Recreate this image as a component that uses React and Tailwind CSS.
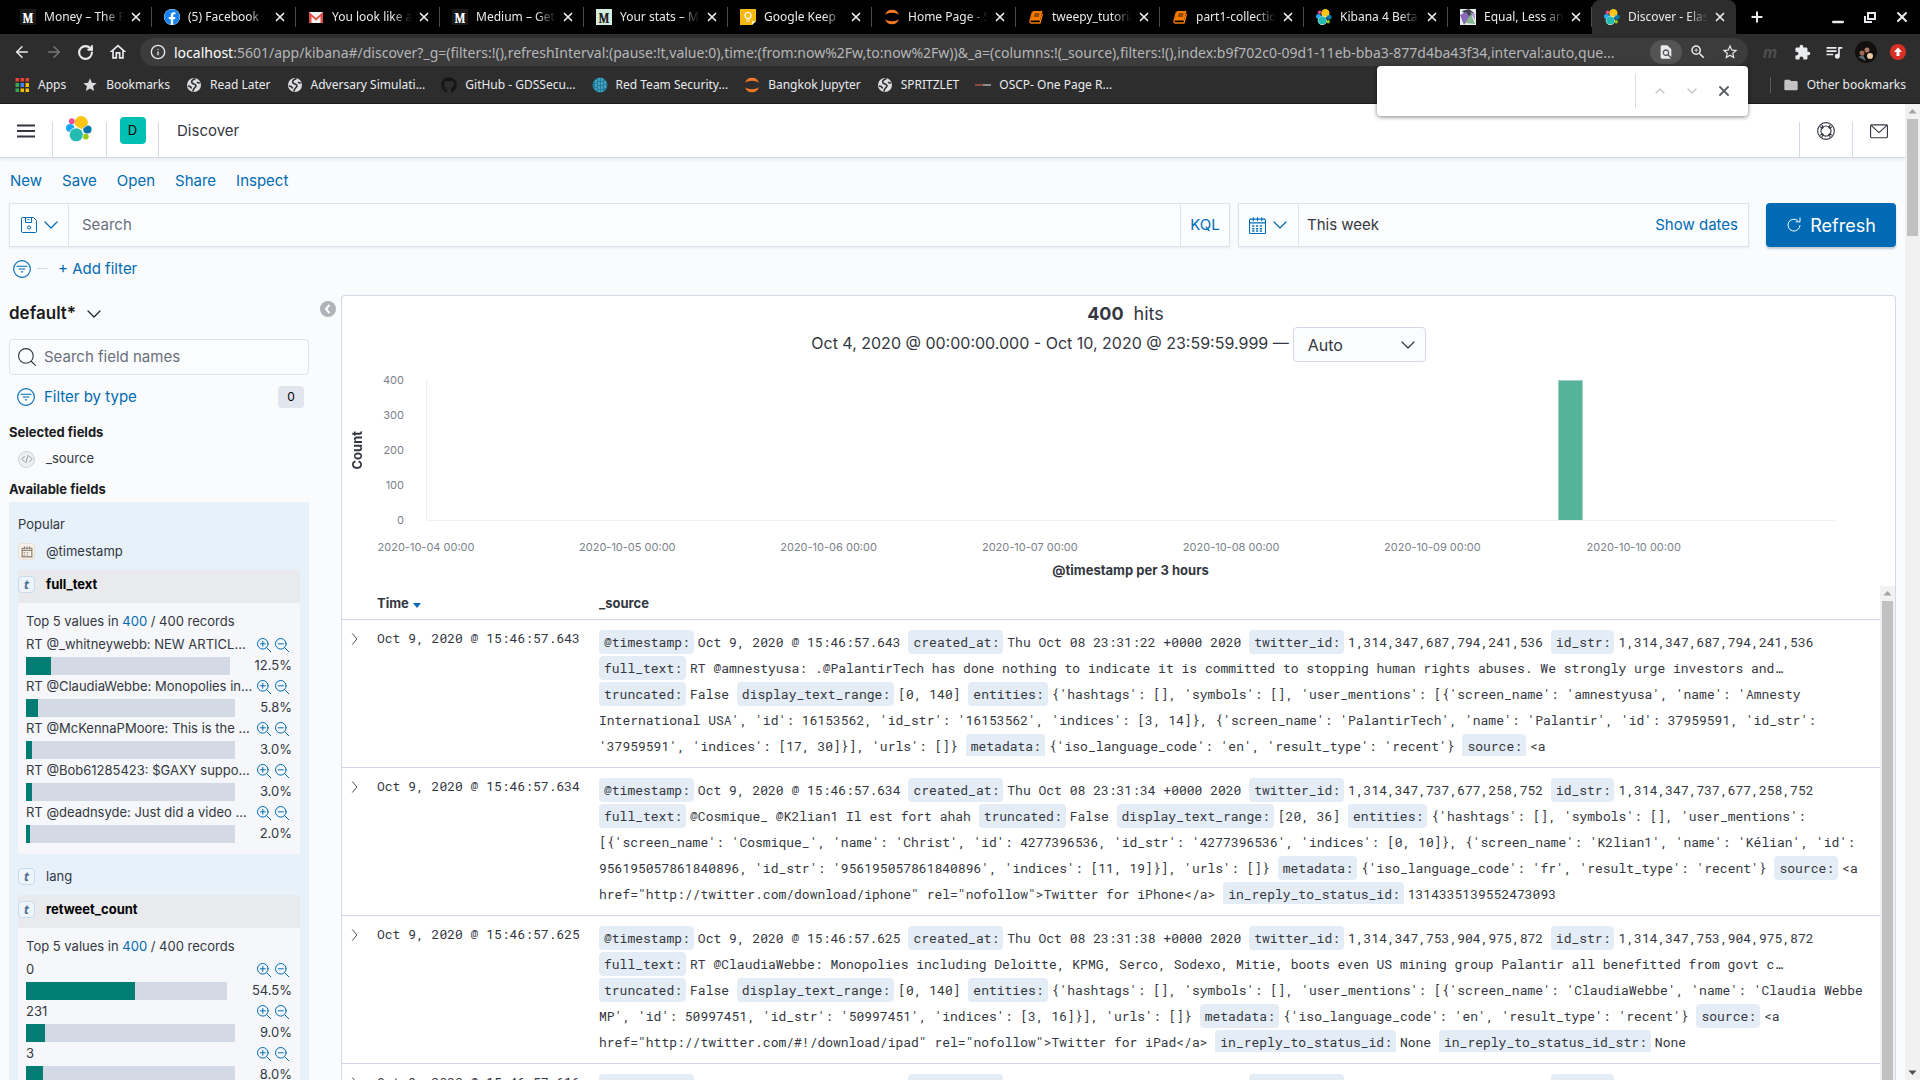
// Discover.jsx
import React from "react";
import { ArrowLeft, ArrowRight, RotateCw, Info, Plus, X, Minus, ChevronUp, ChevronDown } from "lucide-react";
import { MdExtension, MdQueueMusic, MdFindInPage, MdZoomIn, MdStarBorder, MdFolder, MdStar, MdOutlineHome } from "react-icons/md";
import { FaFacebook, FaGithub } from "react-icons/fa";

const ElasticLogo = ({ className }) => (
  <svg viewBox="0 0 26 26" className={className}>
    <ellipse cx="15.2" cy="6.7" rx="6.7" ry="6.7" fill="#FEC514" />
    <ellipse cx="5.8" cy="5.2" rx="2.9" ry="2.9" fill="#F04E98" />
    <ellipse cx="4.2" cy="12" rx="4.2" ry="4" fill="#1BA9F5" />
    <ellipse cx="21.4" cy="13.4" rx="4.2" ry="4" fill="#07A" />
    <ellipse cx="19.8" cy="20.6" rx="2.9" ry="2.9" fill="#93C90E" />
    <ellipse cx="10.2" cy="18.8" rx="7.4" ry="7.2" fill="#fff" />
    <ellipse cx="10.2" cy="18.8" rx="6.7" ry="6.5" fill="#24BBB1" />
    <path d="M8.5 9.6 L15.5 13.4 L21.5 9" fill="none" stroke="#fff" strokeWidth="0.8" />
  </svg>
);

const MediumIcon = ({ className }) => (
  <span className={className}>M</span>
);

const GmailIcon = () => (
  <svg viewBox="0 0 16 16" className="size-4">
    <path d="M1 3h14v11H1z" fill="#f2f2f2" />
    <path d="M1 14V3l7 6 7-6v11h-2.500V7.500L8 11.500 3.500 7.500V14z" fill="#e04a3f" />
  </svg>
);

const KeepIcon = () => (
  <svg viewBox="0 0 16 16" className="size-4">
    <path d="M0 0h16v12l-4 4H0z" fill="#f5b912" />
    <path d="M16 12l-4 4v-4z" fill="#fff3c4" />
    <circle cx="8" cy="6.500" r="3" fill="none" stroke="#fff" strokeWidth="1.200" />
    <path d="M6.500 10h3M6.500 12h3" stroke="#fff" strokeWidth="1.200" />
  </svg>
);

const JupyterIcon = () => (
  <svg viewBox="0 0 16 16" className="size-4">
    <path d="M1 6a7.300 7.300 0 0 1 14 0C12 3 4 3 1 6zM1 10a7.300 7.300 0 0 0 14 0C12 13 4 13 1 10z" fill="#f37726" />
  </svg>
);

const BookIcon = () => (
  <svg viewBox="0 0 16 16" className="size-4">
    <path d="M5 2h9.500l-2.500 9.500H2.500z" fill="#f57c00" />
    <path d="M4.500 3L2 11.500q-.5 2.500 1.500 2.500H12l2.500-9" fill="none" stroke="#f57c00" strokeWidth="1.300" />
    <path d="M6.500 5h5M6 7h5" stroke="#000" strokeWidth="0.800" />
  </svg>
);

const MathIcon = () => (
  <svg viewBox="0 0 16 16" className="size-4">
    <path d="M0 0h16v16H0z" fill="#e9edf0" />
    <path d="M2 2l7-2 5 4-5 5z" fill="#3a4048" />
    <path d="M0 6l6-3 4 5-6 8z" fill="#8a68b8" />
    <path d="M5 14l6-9 4 10z" fill="#86b78d" />
    <path d="M10 3l5 2v6z" fill="#b79bd6" />
  </svg>
);

const GlobeIcon = () => (
  <svg viewBox="0 0 16 16" className="size-4">
    <circle cx="8" cy="8" r="7" fill="#dadce0" />
    <path d="M9.500 1.500C6 3 5 4 6 6c1 1.500 4 .5 4 3-.5 2-3 2-3 5.500M2 9c2 0 3 .5 3.500 2.500M11 5c1 1 2.500 1 3 .5" fill="none" stroke="#2d2d2d" strokeWidth="1.600" />
  </svg>
);

const TealGlobe = () => (
  <svg viewBox="0 0 16 16" className="size-4">
    <circle cx="8" cy="8" r="7.500" fill="#1d7fa0" />
    <path d="M4 3v10M7 1v14M10 1v14M13 4v8" stroke="#7cc6d8" strokeWidth="0.900" strokeDasharray="3 1" />
  </svg>
);

const AppsIcon = () => (
  <svg viewBox="0 0 15 16" className="size-4">
    <path d="M1 1h3.500v3.500H1zM6 1h3.500v3.500H6zM11 1h3.500v3.500H11z" fill="#ea4335" />
    <path d="M1 6h3.500v4H1zM1 11.500h3.500V15H1z" fill="#34a853" />
    <path d="M6 6h3.500v4H6z" fill="#4285f4" />
    <path d="M11 6h3.500v4H11zM6 11.500h3.500V15H6zM11 11.500h3.500V15H11z" fill="#fbbc05" />
  </svg>
);

const OscpIcon = () => (
  <svg viewBox="0 0 16 16" className="size-4">
    <path d="M0 8h8" stroke="#8b4a3c" strokeWidth="2" />
    <path d="M8 8h8" stroke="#8c8c8c" strokeWidth="2" />
  </svg>
);

// thin outlined icons of the Kibana chrome, all on a 16px grid
const Icon = ({ className = "size-4", children }) => (
  <svg viewBox="0 0 16 16" className={className} fill="none" stroke="currentColor" strokeWidth="1" strokeLinecap="round" strokeLinejoin="round">
    {children}
  </svg>
);

const Chevron = ({ className }) => (
  <Icon className={className}>
    <path d="M2 5l6 6 6-6" strokeWidth="1.200" />
  </Icon>
);

const FilterIcon = ({ className }) => (
  <Icon className={className}>
    <circle cx="8" cy="8" r="7.400" />
    <path d="M3.500 5.500h9M5.500 8h5M7.500 10.500h1" />
  </Icon>
);

const Magnifier = ({ minus }) => (
  <Icon className="size-4">
    <circle cx="6.800" cy="6.800" r="5.300" />
    <path d="M10.800 10.800l4 4M4.300 6.800h5" />
    {!minus && <path d="M6.800 4.300v5" />}
  </Icon>
);

const tabs = [
  { title: "Money – The P", icon: <MediumIcon className="grid size-4 place-items-center bg-[#191919] font-serif text-[13px] font-bold text-white" /> },
  { title: "(5) Facebook", icon: <FaFacebook className="size-4 rounded-full bg-white text-[#1283f5]" /> },
  { title: "You look like a", icon: <GmailIcon /> },
  { title: "Medium – Get", icon: <MediumIcon className="grid size-4 place-items-center bg-[#191919] font-serif text-[13px] font-bold text-white" /> },
  { title: "Your stats – Me", icon: <MediumIcon className="grid size-4 place-items-center bg-[#d3eedd] font-serif text-[13px] font-bold text-[#222]" /> },
  { title: "Google Keep", icon: <KeepIcon /> },
  { title: "Home Page - S", icon: <JupyterIcon /> },
  { title: "tweepy_tutoria", icon: <BookIcon /> },
  { title: "part1-collectio", icon: <BookIcon /> },
  { title: "Kibana 4 Beta", icon: <ElasticLogo className="size-4" /> },
  { title: "Equal, Less an", icon: <MathIcon /> },
  { title: "Discover - Elas", icon: <ElasticLogo className="size-4" />, active: true },
];

const bookmarks = [
  { label: "Apps", icon: <AppsIcon /> },
  { label: "Bookmarks", icon: <MdStar className="size-4 text-[#dadce0]" /> },
  { label: "Read Later", icon: <GlobeIcon /> },
  { label: "Adversary Simulati...", icon: <GlobeIcon /> },
  { label: "GitHub - GDSSecu...", icon: <FaGithub className="size-4 text-[#171515]" /> },
  { label: "Red Team Security...", icon: <TealGlobe /> },
  { label: "Bangkok Jupyter", icon: <JupyterIcon /> },
  { label: "SPRITZLET", icon: <GlobeIcon /> },
  { label: "OSCP- One Page R...", icon: <OscpIcon /> },
];

const fullTextValues = [
  { label: "RT @_whitneywebb: NEW ARTICL…", percent: 12.5 },
  { label: "RT @ClaudiaWebbe: Monopolies in…", percent: 5.8 },
  { label: "RT @McKennaPMoore: This is the …", percent: 3.0 },
  { label: "RT @Bob61285423: $GAXY suppo…", percent: 3.0 },
  { label: "RT @deadnsyde: Just did a video …", percent: 2.0 },
];

const retweetValues = [
  { label: "0", percent: 54.5 },
  { label: "231", percent: 9.0 },
  { label: "3", percent: 8.0 },
];

const days = ["2020-10-04", "2020-10-05", "2020-10-06", "2020-10-07", "2020-10-08", "2020-10-09", "2020-10-10"];

const docs = [
  {
    time: "Oct 9, 2020 @ 15:46:57.643",
    fields: [
      ["@timestamp", "Oct 9, 2020 @ 15:46:57.643"],
      ["created_at", "Thu Oct 08 23:31:22 +0000 2020"],
      ["twitter_id", "1,314,347,687,794,241,536"],
      ["id_str", "1,314,347,687,794,241,536"],
      ["full_text", "RT @amnestyusa: .@PalantirTech has done nothing to indicate it is committed to stopping human rights abuses. We strongly urge investors and…"],
      ["truncated", "False"],
      ["display_text_range", "[0, 140]"],
      ["entities", "{'hashtags': [], 'symbols': [], 'user_mentions': [{'screen_name': 'amnestyusa', 'name': 'Amnesty International USA', 'id': 16153562, 'id_str': '16153562', 'indices': [3, 14]}, {'screen_name': 'PalantirTech', 'name': 'Palantir', 'id': 37959591, 'id_str': '37959591', 'indices': [17, 30]}], 'urls': []}"],
      ["metadata", "{'iso_language_code': 'en', 'result_type': 'recent'}"],
      ["source", "<a"],
    ],
  },
  {
    time: "Oct 9, 2020 @ 15:46:57.634",
    fields: [
      ["@timestamp", "Oct 9, 2020 @ 15:46:57.634"],
      ["created_at", "Thu Oct 08 23:31:34 +0000 2020"],
      ["twitter_id", "1,314,347,737,677,258,752"],
      ["id_str", "1,314,347,737,677,258,752"],
      ["full_text", "@Cosmique_ @K2lian1 Il est fort ahah"],
      ["truncated", "False"],
      ["display_text_range", "[20, 36]"],
      ["entities", "{'hashtags': [], 'symbols': [], 'user_mentions': [{'screen_name': 'Cosmique_', 'name': 'Christ', 'id': 4277396536, 'id_str': '4277396536', 'indices': [0, 10]}, {'screen_name': 'K2lian1', 'name': 'Kélian', 'id': 956195057861840896, 'id_str': '956195057861840896', 'indices': [11, 19]}], 'urls': []}"],
      ["metadata", "{'iso_language_code': 'fr', 'result_type': 'recent'}"],
      ["source", '<a href="http://twitter.com/download/iphone" rel="nofollow">Twitter for iPhone</a>'],
      ["in_reply_to_status_id", "1314335139552473093"],
    ],
  },
  {
    time: "Oct 9, 2020 @ 15:46:57.625",
    fields: [
      ["@timestamp", "Oct 9, 2020 @ 15:46:57.625"],
      ["created_at", "Thu Oct 08 23:31:38 +0000 2020"],
      ["twitter_id", "1,314,347,753,904,975,872"],
      ["id_str", "1,314,347,753,904,975,872"],
      ["full_text", "RT @ClaudiaWebbe: Monopolies including Deloitte, KPMG, Serco, Sodexo, Mitie, boots even US mining group Palantir all benefitted from govt c…"],
      ["truncated", "False"],
      ["display_text_range", "[0, 140]"],
      ["entities", "{'hashtags': [], 'symbols': [], 'user_mentions': [{'screen_name': 'ClaudiaWebbe', 'name': 'Claudia Webbe MP', 'id': 50997451, 'id_str': '50997451', 'indices': [3, 16]}], 'urls': []}"],
      ["metadata", "{'iso_language_code': 'en', 'result_type': 'recent'}"],
      ["source", '<a href="http://twitter.com/#!/download/ipad" rel="nofollow">Twitter for iPad</a>'],
      ["in_reply_to_status_id", "None"],
      ["in_reply_to_status_id_str", "None"],
    ],
  },
  {
    time: "Oct 9, 2020 @ 15:46:57.616",
    fields: [
      ["@timestamp", "Oct 9, 2020 @ 15:46:57.616"],
      ["created_at", "Thu Oct 08 23:31:39 +0000 2020"],
      ["twitter_id", "1,314,347,758,904,975,872"],
      ["id_str", "1,314,347,758,904,975,872"],
    ],
  },
];

const BrowserChrome = () => (
  <div className="relative z-10 bg-[#2d2d2d] font-['Noto_Sans',sans-serif] text-[12px] text-[#e8eaed]">
    {/* tab strip */}
    <div className="flex h-[34px] bg-black pl-2">
      {tabs.map((tab, i) => (
        <div
          key={i}
          className={
            tab.active
              ? "flex w-36 items-center rounded-t-lg bg-[#2d2d2d] pr-2 pl-3"
              : "flex w-36 items-center pl-3"
          }
        >
          {tab.icon}
          <span className="ml-2 w-20 overflow-hidden whitespace-nowrap mask-r-from-75%">{tab.title}</span>
          <button type="button" aria-label="Close tab" className="ml-1 grid size-4 place-items-center">
            <X className="size-3.5" strokeWidth={3} />
          </button>
          {!tab.active && <span className="ml-auto h-5 w-px bg-[#4a4a4a]" />}
        </div>
      ))}
      <button type="button" aria-label="New tab" className="ml-[11px] grid w-5 place-items-center">
        <Plus className="size-4" strokeWidth={3} />
      </button>
      <div className="mr-2.5 ml-auto flex items-center gap-4">
        <button type="button" aria-label="Minimize" className="pt-2.5"><Minus className="size-4" strokeWidth={4} /></button>
        <button type="button" aria-label="Restore">
          <svg viewBox="0 0 16 16" className="size-4" fill="none" stroke="currentColor" strokeWidth="2">
            <path d="M6 4h7v6H6zM3 7v6h7" />
          </svg>
        </button>
        <button type="button" aria-label="Close window"><X className="size-4" strokeWidth={3} /></button>
      </div>
    </div>

    {/* toolbar */}
    <div className="flex h-9 items-center">
      <div className="flex gap-3.5 pl-[13px]">
        <button type="button" aria-label="Back"><ArrowLeft className="size-[18px]" strokeWidth={2} /></button>
        <button type="button" aria-label="Forward"><ArrowRight className="size-[18px] text-[#777]" strokeWidth={2} /></button>
        <button type="button" aria-label="Reload"><RotateCw className="size-[17px]" strokeWidth={3} /></button>
        <button type="button" aria-label="Home"><MdOutlineHome className="size-5" /></button>
      </div>
      <div className="ml-3 flex h-7 min-w-0 flex-1 items-center rounded-full bg-[#3c3c3c] pr-0.5 pl-2.5">
        <Info className="size-4 shrink-0" strokeWidth={2} />
        <div role="textbox" aria-label="Address" className="ml-2 min-w-0 flex-1 truncate text-[14px] text-[#b4b6b9]">
          <span className="text-white">localhost</span>
          :5601/app/kibana#/discover?_g=(filters:!(),refreshInterval:(pause:!t,value:0),time:(from:now%2Fw,to:now%2Fw))&amp;_a=(columns:!(_source),filters:!(),index:b9f702c0-09d1-11eb-bba3-877d4ba43f34,interval:auto,que...
        </div>
        <button type="button" aria-label="Find in page" className="grid h-6 w-8 place-items-center rounded-full bg-[#545454]"><MdFindInPage className="size-4" /></button>
        <button type="button" aria-label="Zoom" className="grid w-8 place-items-center"><MdZoomIn className="size-[18px]" /></button>
        <button type="button" aria-label="Bookmark" className="grid w-8 place-items-center"><MdStarBorder className="size-[18px]" /></button>
      </div>
      <div className="mr-1.5 ml-1.5 flex items-center">
        <span className="w-8 text-center text-[16px] font-bold text-[#4c4c4c] italic">m</span>
        <button type="button" aria-label="Extensions" className="grid w-8 place-items-center"><MdExtension className="size-[17px]" /></button>
        <button type="button" aria-label="Media" className="grid w-8 place-items-center"><MdQueueMusic className="size-5" /></button>
        <button type="button" aria-label="Profile" className="grid w-8 place-items-center">
          <svg viewBox="0 0 22 22" className="size-[22px]">
            <circle cx="11" cy="11" r="11" fill="#120f0e" />
            <circle cx="7" cy="12" r="2.500" fill="#a5674e" />
            <circle cx="12" cy="9" r="2.500" fill="#a87a63" />
            <circle cx="15" cy="15" r="3" fill="#e8c9a4" />
            <path d="M3 16l5-2 3 6z" fill="#5d6b70" />
          </svg>
        </button>
        <button type="button" aria-label="Update" className="grid w-8 place-items-center">
          <svg viewBox="0 0 16 16" className="size-4">
            <circle cx="8" cy="8" r="8" fill="#d93025" />
            <path d="M8 3.500l4 4.500H9.500v4h-3V8H4z" fill="#fff" />
          </svg>
        </button>
      </div>
    </div>

    {/* bookmarks */}
    <div className="flex h-[34px] items-center gap-4 border-b border-[#1b1b1b] pr-3.5 pb-1 pl-3.5">
      {bookmarks.map((b) => (
        <a key={b.label} href="#" className="flex items-center gap-2 whitespace-nowrap">
          {b.icon}
          {b.label}
        </a>
      ))}
      <a href="#" className="ml-auto flex items-center gap-2 whitespace-nowrap">
        <span className="mr-1 h-4 w-px bg-[#5a5a5a]" />
        <MdFolder className="size-4 text-[#c4c4c4]" />
        Other bookmarks
      </a>
    </div>

    {/* find in page popup */}
    <div className="absolute top-[66px] right-[172px] flex h-[50px] w-[371px] items-center rounded-sm bg-white text-[#5f6368] shadow-[0_1px_4px_rgba(0,0,0,0.5)]">
      <input type="text" aria-label="Find in page" className="ml-3 min-w-0 flex-1 outline-none" />
      <div className="mr-2 flex h-[34px] items-center border-l border-[#dadce0] pl-2">
        <button type="button" aria-label="Previous" className="grid w-8 place-items-center text-[#c4c6c8]"><ChevronUp className="size-4" /></button>
        <button type="button" aria-label="Next" className="grid w-8 place-items-center text-[#c4c6c8]"><ChevronDown className="size-4" /></button>
        <button type="button" aria-label="Close" className="grid w-8 place-items-center"><X className="size-4" strokeWidth={3} /></button>
      </div>
    </div>
  </div>
);

const KibanaHeader = () => (
  <header className="relative flex h-[54px] shrink-0 items-stretch border-b border-[#d3dae6] bg-white shadow-[0_2px_3px_rgba(152,162,179,0.2)]">
    <button type="button" aria-label="Menu" className="grid w-[52px] place-items-center">
      <svg viewBox="0 0 18 14" className="h-3.5 w-[18px]" stroke="#343741" strokeWidth="1.800">
        <path d="M0 1.500h18M0 7h18M0 12.500h18" />
      </svg>
    </button>
    <span className="mt-[18px] w-px bg-[#d3dae6]" />
    <a href="#" aria-label="Elastic home" className="grid w-[53px] place-items-center pr-0.5 pb-1"><ElasticLogo className="size-[26px]" /></a>
    <span className="mt-[18px] w-px bg-[#d3dae6]" />
    <div className="grid w-[51px] place-items-center">
      <span className="grid h-[27px] w-[26px] place-items-center rounded bg-[#00bfb3] text-[13px] text-black">D</span>
    </div>
    <span className="mt-[18px] w-px bg-[#d3dae6]" />
    <h1 className="ml-[18px] self-center pt-0.5 text-[15px]">Discover</h1>
    <div className="ml-auto flex">
      <span className="mt-[18px] w-px bg-[#d3dae6]" />
      <button type="button" aria-label="Help" className="grid w-[52px] place-items-center">
        <Icon className="size-[18px]">
          <circle cx="8" cy="8" r="7.400" />
          <circle cx="8" cy="8" r="4.500" />
          <path d="M3 4.500l2 1M4.500 3l1 2M13 4.500l-2 1M11.500 3l-1 2M3 11.500l2-1M4.500 13l1-2M13 11.500l-2-1M11.500 13l-1-2" />
        </Icon>
      </button>
      <span className="mt-[18px] w-px bg-[#d3dae6]" />
      <button type="button" aria-label="Newsfeed" className="grid w-[52px] place-items-center">
        <Icon className="size-[18px]">
          <rect x="0.500" y="2.500" width="15" height="11.500" rx="1" />
          <path d="M1 3l7 6.500L15 3" />
        </Icon>
      </button>
    </div>
  </header>
);

const QueryBar = () => (
  <div className="px-[9px]">
    <nav className="flex h-[45px] items-center gap-5 pt-0.5 pl-px text-[15px] text-[#006bb4]">
      {["New", "Save", "Open", "Share", "Inspect"].map((item) => (
        <a key={item} href="#">{item}</a>
      ))}
    </nav>
    <div className="flex h-11 text-[15px]">
      <div className="flex flex-1 border border-[#dfe3ec] bg-[#fbfcfd] shadow-[0_1px_2px_rgba(152,162,179,0.2)]">
        <button type="button" aria-label="Saved queries" className="flex w-[59px] items-center justify-center gap-1.5 border-r border-[#dfe3ec] pl-0.5 text-[#006bb4]">
          <Icon className="size-4">
            <path d="M.5 1.500a1 1 0 0 1 1-1h11l3 3v11a1 1 0 0 1-1 1h-13a1 1 0 0 1-1-1zM4.500.5v5h6v-5M7 2.500h1" />
            <circle cx="8" cy="10.500" r="1.600" />
          </Icon>
          <Chevron className="size-4" />
        </button>
        <input type="text" aria-label="Search" placeholder="Search" className="min-w-0 flex-1 px-[13px] placeholder-[#69707d] outline-none" />
        <button type="button" className="w-[49px] border-l border-[#dfe3ec] text-[#006bb4]">KQL</button>
      </div>
      <div className="ml-2 flex w-[511px] border border-[#dfe3ec] bg-[#fbfcfd] shadow-[0_1px_2px_rgba(152,162,179,0.2)]">
        <button type="button" aria-label="Quick date" className="flex w-[60px] items-center justify-center gap-1.5 border-r border-[#dfe3ec] text-[#006bb4]">
          <Icon className="size-[17px]">
            <rect x="0.500" y="2" width="15" height="13.500" rx="1" />
            <path d="M.5 5.500h15M4 .5v3M8 .5v3M12 .5v3" />
            <path d="M3.500 8.500h9M3.500 11h9M3.500 13.200h9" strokeDasharray="1 2.600" strokeWidth="1.400" />
          </Icon>
          <Chevron className="size-4" />
        </button>
        <span className="flex-1 self-center pl-2">This week</span>
        <button type="button" className="px-2.5 text-[#006bb4]">Show dates</button>
      </div>
      <button type="button" className="ml-[17px] flex w-[130px] items-center justify-center gap-2 rounded bg-[#006bb4] text-[18px] text-white shadow-[0_2px_2px_rgba(54,97,126,0.3)]">
        <Icon className="size-4">
          <path d="M14 8.500a6 6 0 1 1-2.500-5.300M14 .8v4h-4" />
        </Icon>
        Refresh
      </button>
    </div>
    <div className="flex h-[43px] items-center text-[15px] text-[#006bb4]">
      <button type="button" aria-label="Filter options" className="ml-1"><FilterIcon className="size-[18px]" /></button>
      <span className="ml-1.5 h-px w-[11px] bg-[#d3dae6]" />
      <button type="button" className="ml-2.5 pt-0.5">+ Add filter</button>
    </div>
  </div>
);

const FieldIcon = ({ type }) => {
  if (type === "source") {
    return (
      <span className="grid size-[17px] place-items-center rounded-full border border-[#d0d0d2] bg-[#eeeff1] text-[#7a7f89]">
        <Icon className="size-3">
          <path d="M4.500 4.500L1 8l3.500 3.500M11.500 4.500L15 8l-3.500 3.500M9.500 3l-3 10" />
        </Icon>
      </span>
    );
  }
  if (type === "date") {
    return (
      <span className="grid size-[17px] place-items-center rounded-sm border border-[#ebe1d3] bg-[#f7f2ea] text-[#8a7f6d]">
        <Icon className="size-3">
          <path d="M1.500 3h13v11.500h-13zM1.500 6h13M4.500 1v3M8 1v3M11.500 1v3" strokeWidth="1.500" />
          <path d="M4 9h8M4 12h8" strokeDasharray="1 3" strokeWidth="1.500" />
        </Icon>
      </span>
    );
  }
  return (
    <span className="grid size-[17px] place-items-center rounded-sm border border-[#c7dcec] bg-[#edf4fa] font-['Noto_Sans'] text-[12px] leading-none font-bold text-[#4a7194] italic">t</span>
  );
};

const FieldStats = ({ values }) => (
  <div className="bg-[#f5f7fa] px-2 pt-2 pb-[9px]">
    <p className="h-5 leading-5">
      Top 5 values in <a href="#" className="text-[#006bb4]">400</a> / 400 records
    </p>
    <ul className="mt-1">
      {values.map((v) => (
        <li key={v.label} className="h-[42px]">
          <div className="flex h-5 items-center pr-0.5">
            <span className="whitespace-nowrap">{v.label}</span>
            <button type="button" aria-label="Filter for value" className="ml-auto text-[#006bb4]"><Magnifier /></button>
            <button type="button" aria-label="Filter out value" className="ml-0.5 text-[#006bb4]"><Magnifier minus /></button>
          </div>
          <div className="mt-0.5 flex h-[18px] items-center">
            <div className="h-[18px] flex-1 bg-[#d3dae6]">
              <div className="h-full bg-[#017d73]" style={{ width: `${v.percent}%` }} />
            </div>
            <span className="ml-[25px] text-right">{v.percent.toFixed(1)}%</span>
          </div>
        </li>
      ))}
    </ul>
  </div>
);

const Sidebar = () => (
  <aside className="w-[300px] shrink-0 text-[13px]">
    <button type="button" className="flex h-9 items-center gap-2.5 pt-0.5 text-[17px] font-semibold text-[#1a1c21]">
      default*
      <Chevron className="size-4" />
    </button>
    <label className="mt-2 flex h-9 items-center gap-2 rounded-sm border border-[#dfe3ec] bg-[#fbfcfd] px-2 text-[15px]">
      <Icon className="size-[18px]">
        <circle cx="7" cy="7" r="6.500" />
        <path d="M12 12l3.500 3.500" />
      </Icon>
      <input type="text" aria-label="Search field names" placeholder="Search field names" className="min-w-0 flex-1 placeholder-[#69707d] outline-none" />
    </label>
    <div className="mt-2.5 flex h-[23px] items-center pr-[5px] pl-2">
      <button type="button" className="flex items-center gap-[9px] pt-px text-[15px] text-[#006bb4]">
        <FilterIcon className="size-[18px]" />
        Filter by type
      </button>
      <span className="ml-auto grid h-[22px] w-[26px] place-items-center rounded bg-[#e0e5ee] text-[12px] text-black">0</span>
    </div>
    <h2 className="mt-3.5 h-5 leading-5 font-bold text-[#1a1c21]">Selected fields</h2>
    <div className="flex h-[33px] items-center gap-[11px] pt-px pl-[9px]">
      <FieldIcon type="source" />
      _source
    </div>
    <h2 className="mt-1 h-5 leading-5 font-bold text-[#1a1c21]">Available fields</h2>
    <div className="mt-[3px] bg-[#e6f1fa] px-[9px] pt-3 pb-3">
      <h3 className="h-5 leading-5">Popular</h3>
      <div className="flex h-9 items-center gap-[11px] pb-px">
        <FieldIcon type="date" />
        @timestamp
      </div>
      <button type="button" className="flex h-[33px] w-full items-center gap-[11px] bg-[#e9eaed] pb-1 font-bold text-black">
        <FieldIcon type="text" />
        full_text
      </button>
      <FieldStats values={fullTextValues} />
      <div className="flex h-[41px] items-center gap-[11px] pt-1">
        <FieldIcon type="text" />
        lang
      </div>
      <button type="button" className="flex h-[33px] w-full items-center gap-[11px] bg-[#e9eaed] pb-1 font-bold text-black">
        <FieldIcon type="text" />
        retweet_count
      </button>
      <FieldStats values={retweetValues} />
    </div>
  </aside>
);

const Histogram = () => (
  <div className="mt-2 flex pr-[60px] pl-[7px]">
    <div className="flex h-[160px] w-4 items-center justify-center">
      <span className="rotate-180 text-[13px] leading-4 font-bold [writing-mode:vertical-rl]">Count</span>
    </div>
    <div className="flex h-[160px] w-[39px] flex-col justify-between text-right text-[11px] leading-5 text-[#7b818c]">
      {[400, 300, 200, 100, 0].map((n) => (
        <span key={n}>{n}</span>
      ))}
    </div>
    <div className="ml-[22px] flex-1 pt-2.5">
      <div className="relative h-[141px] border-b border-l border-[#eef0f3]">
        <div className="absolute bottom-0 h-full w-[25px] border border-b-0 border-[#9fd2c1] bg-[#54b399]" style={{ left: `${(45 / 56) * 100}%` }} />
      </div>
      <div className="relative mt-4 h-5 text-[11px] leading-5 whitespace-nowrap text-[#7b818c]">
        {days.map((day, i) => (
          <span key={day} className="absolute -translate-x-1/2" style={{ left: `${(i / 7) * 100}%` }}>{day} 00:00</span>
        ))}
      </div>
      <p className="mt-[3px] text-center text-[13px] leading-5 font-bold">@timestamp per 3 hours</p>
    </div>
  </div>
);

const DocTable = () => (
  <table className="w-full table-fixed text-left">
    <thead>
      <tr className="h-[33px] text-[13px] font-bold">
        <th className="w-[35px]" />
        <th className="w-[222px] pt-0.5 font-bold">
          <button type="button" className="flex items-center gap-1">
            Time
            <svg viewBox="0 0 8 5" className="mt-1 h-[5px] w-2" fill="#006bb4"><path d="M0 0h8L4 5z" /></svg>
          </button>
        </th>
        <th className="pt-0.5 font-bold">_source</th>
      </tr>
    </thead>
    <tbody className="font-['Roboto_Mono','DejaVu_Sans_Mono',monospace] text-[13px]">
      {docs.map((doc) => (
        <tr key={doc.time} className="h-[148px] border-t border-[#d3dae6] align-top">
          <td className="pt-3 pl-[7px]">
            <button type="button" aria-label="Expand" className="block">
              <Icon className="size-3.5">
                <path d="M4 2l5 6-5 6" />
              </Icon>
            </button>
          </td>
          <td className="pt-2 leading-5">{doc.time}</td>
          <td className="pt-[9px]">
            <dl className="max-h-[127px] overflow-hidden leading-[26px]">
              {doc.fields.map(([name, value]) => (
                <React.Fragment key={name}>
                  <dt className="mr-1 inline rounded bg-[#e4edf5] py-[3px] pr-1 pl-[5px]">{name}:</dt>
                  <dd className="inline">{value} </dd>
                </React.Fragment>
              ))}
            </dl>
          </td>
        </tr>
      ))}
    </tbody>
  </table>
);

const ScrollArrow = ({ down }) => (
  <svg viewBox="0 0 15 15" className="size-[15px] shrink-0">
    <path d={down ? "M3.500 5.500h8L7.500 10z" : "M3.500 9.500h8L7.500 5z"} fill={down ? "#505050" : "#a3a3a3"} />
  </svg>
);

const App = () => {
  return (
    <div className="flex h-screen flex-col overflow-hidden font-['Inter',sans-serif] text-[#343741]">
      <BrowserChrome />
      <div className="flex min-h-0 flex-1">
        <div className="flex min-w-0 flex-1 flex-col overflow-hidden bg-[#fafbfd]">
          <KibanaHeader />
          <QueryBar />
          <div className="flex min-h-0 flex-1 pt-[5px] pr-[9px] pl-[9px]">
            <Sidebar />
            <button type="button" aria-label="Toggle sidebar" className="mt-1.5 ml-[11px] size-4 shrink-0">
              <svg viewBox="0 0 16 16" className="size-4">
                <circle cx="8" cy="8" r="8" fill="#b0b3b9" />
                <path d="M9.500 4L6 8l3.500 4" fill="none" stroke="#fff" strokeWidth="2" />
              </svg>
            </button>
            <main className="ml-[5px] flex min-w-0 flex-1 flex-col rounded-t border border-b-0 border-[#d3dae6] bg-white">
              <div className="flex h-[31px] items-center justify-center gap-2.5 pt-1 pl-3.5 text-[18px]">
                <strong className="font-bold">400</strong>
                <span>hits</span>
              </div>
              <div className="flex items-center justify-center gap-1 text-[16px]">
                <span className="pb-1">Oct 4, 2020 @ 00:00:00.000 - Oct 10, 2020 @ 23:59:59.999 —</span>
                <div className="relative w-[133px]">
                  <select aria-label="Interval" className="h-[35px] w-full appearance-none rounded border border-[#d3dae6] bg-[#fbfcfd] px-3.5">
                    <option>Auto</option>
                  </select>
                  <Chevron className="pointer-events-none absolute top-2.5 right-2.5 size-4" />
                </div>
              </div>
              <Histogram />
              <div className="mt-1.5 flex min-h-0 flex-1">
                <div className="min-w-0 flex-1 overflow-hidden">
                  <DocTable />
                </div>
                <div className="flex w-[15px] flex-col bg-[#f1f1f1]">
                  <ScrollArrow />
                  <div className="mx-0.5 flex-1 bg-[#c1c1c1]" />
                </div>
              </div>
            </main>
          </div>
        </div>
        <div className="flex w-[15px] shrink-0 flex-col bg-[#f1f1f1]">
          <ScrollArrow />
          <div className="mx-0.5 h-[117px] bg-[#c1c1c1]" />
          <div className="flex-1" />
          <ScrollArrow down />
        </div>
      </div>
    </div>
  );
};

export default App;
